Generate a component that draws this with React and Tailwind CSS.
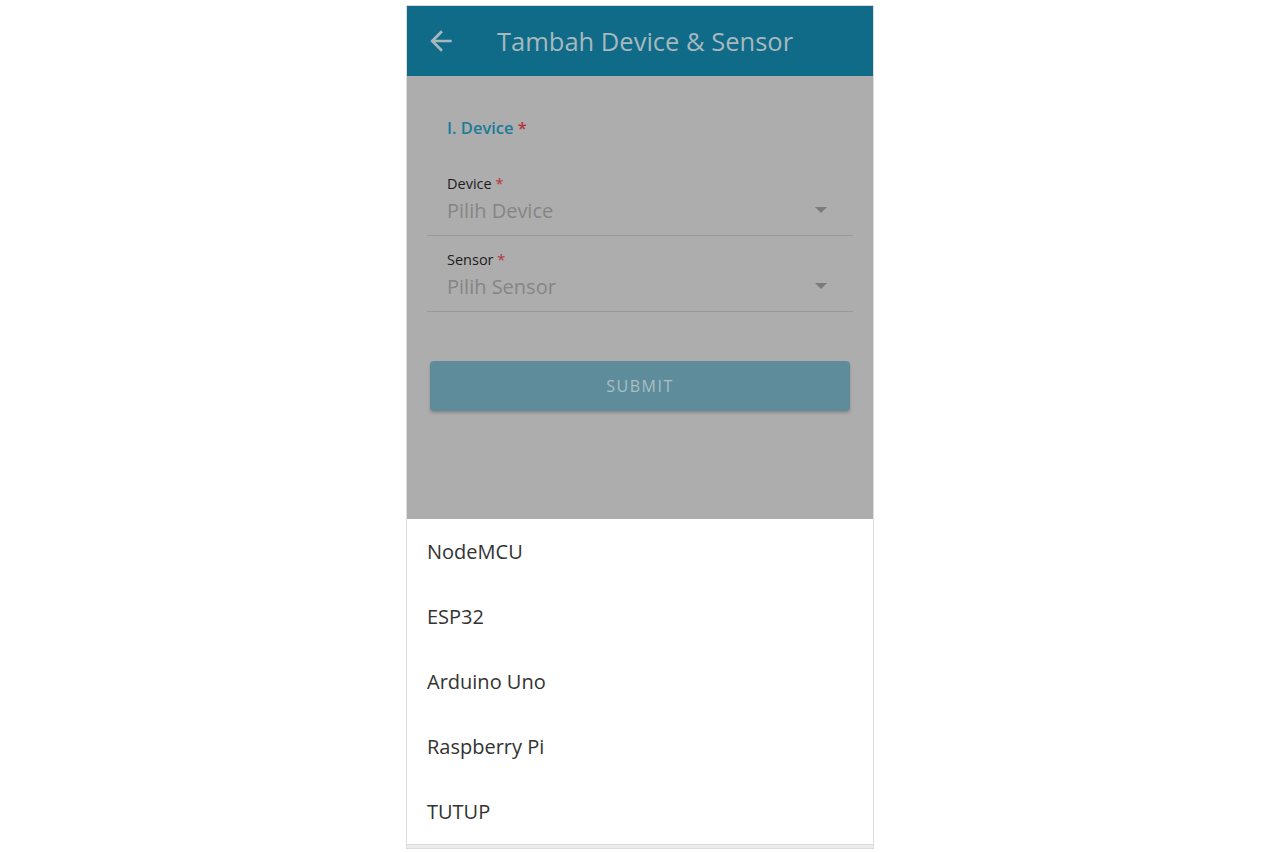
import React from 'react';

const OPTIONS = ['NodeMCU', 'ESP32', 'Arduino Uno', 'Raspberry Pi', 'TUTUP'];

const Caret = () => (
  <svg width={12} height={6} viewBox="0 0 12 6" className="mr-[26px] mb-[2px]">
    <path d="M0 0 L12 0 L6 6 Z" fill="#7b7b7b" />
  </svg>
);

const SelectField = ({ label, placeholder }) => (
  <div className="border-b border-[#9a9a9a] pb-[11px]">
    <div className="pl-5 text-[14.5px] leading-[20px] text-[#1c1c1c]">
      {label} <span className="text-[#b3343f]">*</span>
    </div>
    <div className="flex items-center justify-between mt-[3px]">
      <span className="pl-5 text-[20px] leading-[27px] text-[#858585]">{placeholder}</span>
      <Caret />
    </div>
  </div>
);

export default function App() {
  return (
    <div className="min-h-screen bg-white flex justify-center pt-[5px]" style={{ fontFamily: '"Open Sans", "Noto Sans", sans-serif' }}>
      <div className="w-[468px] h-[844px] border border-[#dcdcdc] flex flex-col bg-[#ececec]">
        {/* Header */}
        <div className="h-[70px] bg-[#0f6b87] flex items-center shrink-0">
          <svg width={32} height={32} viewBox="0 0 24 24" className="ml-[18px]">
            <path d="M20 11H7.83l5.59-5.59L12 4l-8 8 8 8 1.41-1.41L7.83 13H20v-2z" fill="#a7b8bf" />
          </svg>
          <span className="ml-[40px] text-[25.5px] leading-[34px] text-[#a7b8bf]">Tambah Device &amp; Sensor</span>
        </div>

        {/* Form under overlay */}
        <div className="h-[443px] bg-[#adadad] px-5 pt-[40px] shrink-0">
          <div className="pl-5 text-[16.5px] leading-[24px] font-semibold text-[#1b7b98]">
            I. Device <span className="text-[#b3343f]">*</span>
          </div>
          <div className="mt-[34px]">
            <SelectField label="Device" placeholder="Pilih Device" />
          </div>
          <div className="mt-[14px]">
            <SelectField label="Sensor" placeholder="Pilih Sensor" />
          </div>
          <div className="mx-[3px] mt-[49px] h-[50px] rounded-[4px] bg-[#5e8c9a] shadow-[0_2px_3px_rgba(0,0,0,0.2)] flex items-center justify-center">
            <span className="text-[16px] tracking-[1.5px] text-[#a8bfc6]">SUBMIT</span>
          </div>
        </div>

        {/* Bottom sheet */}
        <div className="bg-white border-b border-[#dcdcdc]">
          {OPTIONS.map((o) => (
            <div key={o} className="h-[65px] flex items-center px-5 text-[20px] text-[#333333]">
              {o}
            </div>
          ))}
        </div>
      </div>
    </div>
  );
}
